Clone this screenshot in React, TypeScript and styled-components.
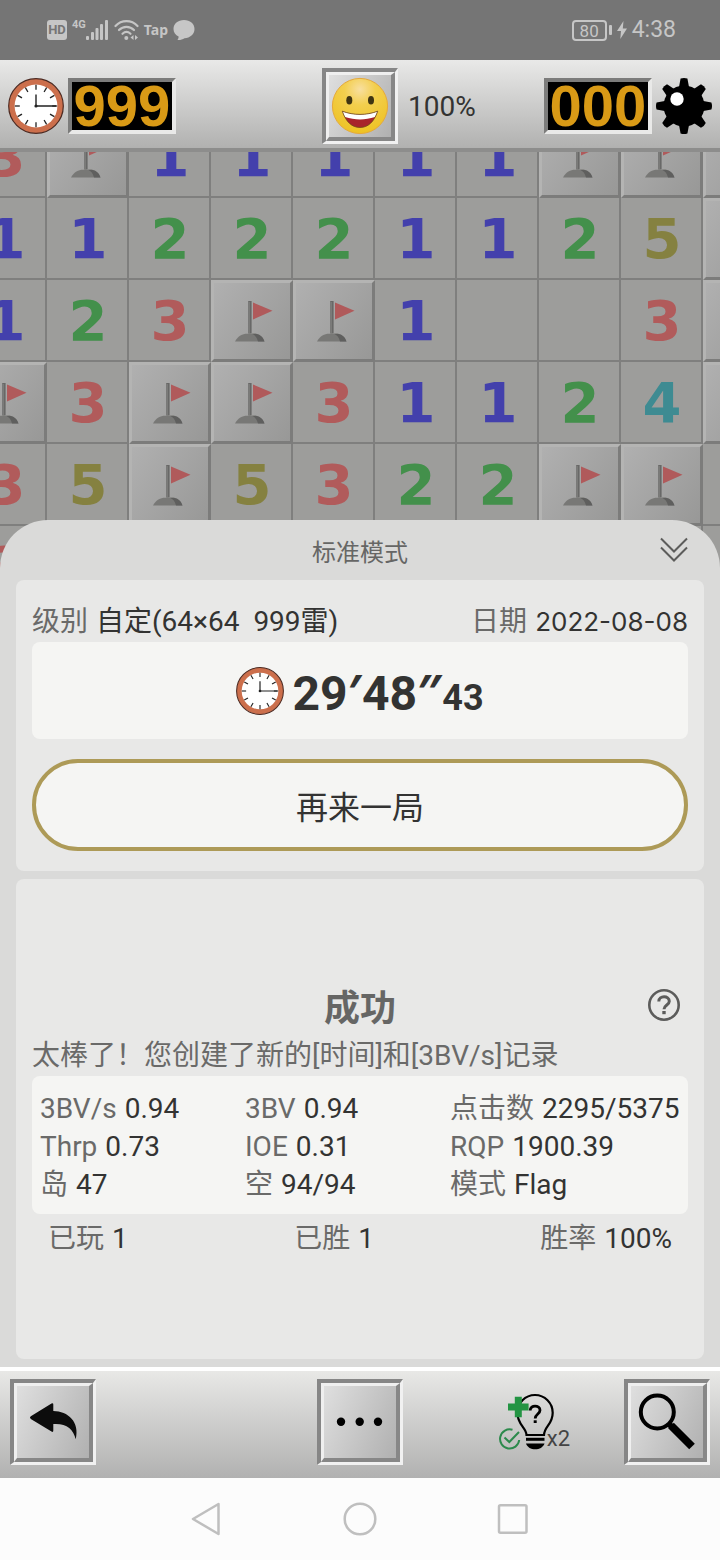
import React from "react";
import styled, { createGlobalStyle, css } from "styled-components";

const GlobalStyle = createGlobalStyle`
  *, *::before, *::after { box-sizing: border-box; }
  body {
    margin: 0;
    background: #fcfcfc;
    color: #333332;
    font-family: "Roboto", "Noto Sans CJK SC", sans-serif;
    font-size: 28px;
  }
  button { font: inherit; color: inherit; cursor: pointer; }
  svg { display: block; flex: none; }
`;

const Page = styled.div`
  min-height: 100vh;
  display: flex;
  flex-direction: column;
`;

/* ---------- system status bar ---------- */

const StatusBar = styled.header`
  height: 60px;
  padding: 0 44px 0 47px;
  display: flex;
  align-items: center;
  justify-content: space-between;
  background: #757575;
  color: #c6c6c6;
`;

const StatusGroup = styled.div`
  display: flex;
  align-items: center;
  gap: 5px;
`;

const HdBadge = styled.span`
  width: 20px;
  height: 20px;
  border-radius: 3px;
  background: #c6c6c6;
  color: #757575;
  font: bold 13px/20px "Roboto", sans-serif;
  text-align: center;
`;

const Network = styled.span`
  display: flex;
  align-items: flex-start;
  height: 22px;
  font: bold 11px/12px "Roboto", sans-serif;
`;

const TapLabel = styled.span`
  font: bold 14px/20px "Noto Sans", sans-serif;
`;

const Battery = styled.span`
  width: 35px;
  height: 21px;
  border: 2px solid #c6c6c6;
  border-radius: 4px;
  font: 17px/18px "Roboto", sans-serif;
  text-align: center;
`;

const BatteryTip = styled.span`
  width: 3px;
  height: 10px;
  margin-left: -3px;
  border-radius: 1px;
  background: #c6c6c6;
`;

const StatusTime = styled.time`
  font: 23px/28px "Roboto", sans-serif;
`;

/* ---------- game bar ---------- */

const GameBar = styled.div`
  height: 92px;
  padding: 4px 8px 0;
  display: grid;
  grid-template-columns: 1fr auto 1fr;
  align-items: center;
  border-bottom: 4px solid #8d8d8c;
  background: linear-gradient(#e9e9e8, #b1b1b0);
`;

const BarSide = styled.div`
  display: flex;
  align-items: center;
  gap: 4px;
`;

const Progress = styled.span`
  flex: 1;
  padding-left: 10px;
`;

const Counter = styled.output`
  width: 108px;
  height: 56px;
  display: flex;
  align-items: center;
  justify-content: center;
  border: 4px solid;
  border-color: #7c7c7b #e9e9e8 #e9e9e8 #7c7c7b;
  background: #000;
  color: #d99a16;
  font: bold 58px/48px "Liberation Sans", sans-serif;
`;

const BevelFrame = styled.button<{ $size: number }>`
  width: ${(p) => p.$size}px;
  height: ${(p) => p.$size}px;
  padding: 0;
  border: solid;
  border-width: 4px 3px 3px 4px;
  border-color: #868686 #f1f1f1 #f1f1f1 #868686;
  background: none;
`;

const BevelFace = styled.span`
  width: 100%;
  height: 100%;
  display: flex;
  align-items: center;
  justify-content: center;
  border: solid;
  border-width: 3px 4px 4px 3px;
  border-color: #efefef #878787 #878787 #efefef;
  background: linear-gradient(115deg, #dfdfdf, #b0b0b0);
`;

/* ---------- board ---------- */

const Board = styled.main`
  height: 416px;
  overflow: hidden;
  background: #9d9d9b;
`;

const Field = styled.div`
  width: max-content;
  margin: -36px 0 0 -35px;
  display: grid;
  grid-template-columns: repeat(10, 82px);
  grid-auto-rows: 82px;
`;

const numberColors: Record<string, string> = {
  "1": "#4340ac",
  "2": "#43904b",
  "3": "#b15b5b",
  "4": "#3e8b92",
  "5": "#858140",
};

const Cell = styled.div<{ $raised?: boolean; $value: string }>`
  display: flex;
  align-items: center;
  justify-content: center;
  color: ${(p) => numberColors[p.$value] ?? "inherit"};
  font: bold 56px/80px "DejaVu Sans", sans-serif;
  ${(p) =>
    p.$raised
      ? css`
          border: 3px solid;
          border-color: #b4b4b3 #7c7c7b #7c7c7b #b4b4b3;
          background: linear-gradient(125deg, #b0b0b0, #989897);
        `
      : css`
          box-shadow: inset -2px -2px #7f7f7e;
        `}
`;

/* ---------- result sheet ---------- */

const Sheet = styled.section`
  position: relative;
  flex: 1;
  margin-top: -48px;
  padding: 0 16px 8px;
  display: flex;
  flex-direction: column;
  gap: 8px;
  border-radius: 48px 48px 0 0;
  background: #dadad9;
`;

const CenteredRow = styled.div<{ $height: number; $inset: number }>`
  height: ${(p) => p.$height}px;
  padding-right: ${(p) => p.$inset}px;
  padding-left: ${(p) => p.$inset}px;
  display: grid;
  grid-template-columns: 1fr auto 1fr;
  align-items: center;
`;

const SheetTitle = styled.h1`
  grid-column: 2;
  margin: 0;
  color: #666665;
  font-size: 24px;
  font-weight: 400;
`;

const IconButton = styled.button`
  justify-self: end;
  padding: 0;
  border: 0;
  background: none;
  color: #5c5c5b;
`;

const Card = styled.section<{ $fill?: boolean }>`
  padding: ${(p) => (p.$fill ? "0 16px" : "0 16px 20px")};
  border-radius: 8px;
  background: #e8e8e7;
  ${(p) =>
    p.$fill
      ? css`
          flex: 1;
          display: flex;
          flex-direction: column;
          justify-content: center;
        `
      : css`
          margin-top: -8px;
        `}
`;

const Pair = styled.div`
  display: flex;
  align-items: baseline;
  gap: 8px;
  line-height: 42px;
  white-space: pre;
`;

const InfoRow = styled.dl`
  margin: 0;
  padding-top: 22px;
  display: flex;
  justify-content: space-between;

  ${Pair} { line-height: 40px; }
`;

const Label = styled.dt`
  color: #6a6a69;
`;

const Value = styled.dd`
  margin: 0;
`;

const DateValue = styled(Value)`
  font-family: "Inter", sans-serif;
  font-size: 26px;
`;

const TimeBox = styled.div`
  height: 97px;
  display: flex;
  align-items: center;
  justify-content: center;
  gap: 8px;
  border-radius: 8px;
  background: #f5f5f3;
  font-weight: 700;
`;

const Time = styled.time`
  padding-top: 8px;
  font-size: 48px;
  line-height: 60px;
`;

const Prime = styled.span`
  font-family: "Noto Sans", sans-serif;
`;

const Fraction = styled.span`
  font-size: 36px;
`;

const AgainButton = styled.button`
  width: 100%;
  height: 92px;
  margin-top: 20px;
  border: 4px solid #ad9a57;
  border-radius: 46px;
  background: #f5f5f3;
  font-size: 32px;
`;

const ResultTitle = styled.h2`
  grid-column: 2;
  margin: 0;
  color: #666665;
  font-size: 36px;
  font-weight: 700;
`;

const Message = styled.p`
  margin: 0;
  padding-top: 4px;
  color: #6a6a69;
  line-height: 40px;
`;

const Stats = styled.dl`
  margin: 0;
  padding: 14px 8px 10px;
  display: grid;
  grid-template-columns: 205fr 205fr 230fr;
  border-radius: 8px;
  background: #f5f5f3;

  ${Pair} { line-height: 38px; }
`;

const Summary = styled.dl`
  margin: 0;
  padding: 4px 16px 0;
  display: flex;
  justify-content: space-between;
`;

/* ---------- toolbar and navigation ---------- */

const Toolbar = styled.nav`
  height: 111px;
  padding: 8px 10px 0;
  display: grid;
  grid-template-columns: 86px 1fr 86px 1fr 86px;
  align-items: start;
  border-top: 4px solid #fff;
  background: linear-gradient(#e8e8e6, #bfbfbe 75%, #b1b1b1);
`;

const ToolSlot = styled.div<{ $column: number }>`
  grid-column: ${(p) => p.$column};
`;

const HintButton = styled.button`
  grid-column: 4;
  justify-self: end;
  margin-right: 54px;
  padding: 11px 0 0;
  display: flex;
  align-items: flex-end;
  border: 0;
  background: none;
`;

const HintCount = styled.span`
  margin-left: -10px;
  color: #444;
  font-size: 22px;
  line-height: 22px;
`;

const SystemNav = styled.footer`
  height: 82px;
  display: flex;
  align-items: center;
  justify-content: center;
  gap: 119px;
  background: #fcfcfc;
`;

const NavButton = styled.button`
  padding: 0;
  border: 0;
  background: none;
  color: #bfbfbf;
`;

/* ---------- drawings ---------- */

const ticks = Array.from({ length: 12 }, (_, i) => i * 30);

const Clock = ({ size }: { size: number }) => (
  <svg width={size} height={size} viewBox="0 0 56 56" aria-hidden="true">
    <circle cx="28" cy="28" r="27.3" fill="#cc6f4c" stroke="#4c2a22" strokeWidth="1.2" />
    <circle cx="28" cy="28" r="21.4" fill="#fff" />
    {ticks.map((a) => (
      <path key={a} d="M28 6.8v5" stroke="#222" strokeWidth="1.3" transform={`rotate(${a} 28 28)`} />
    ))}
    <path d="M28 28V16.5M28 28h20" stroke="#222" strokeWidth="1.4" />
    <circle cx="28" cy="28" r="1.6" fill="#222" />
  </svg>
);

const Smiley = () => (
  <svg width="58" height="58" viewBox="-1 -1 58 58" aria-hidden="true">
    <defs>
      <radialGradient id="skin" cx="0.5" cy="0.2" r="0.8">
        <stop offset="0" stopColor="#f8dfa0" />
        <stop offset="0.35" stopColor="#f3cf4e" />
        <stop offset="1" stopColor="#eec224" />
      </radialGradient>
    </defs>
    <circle cx="28" cy="28" r="27.6" fill="url(#skin)" stroke="#e5a93c" strokeWidth="1" />
    <ellipse cx="17.3" cy="22.2" rx="3" ry="4.3" fill="#3f3412" />
    <ellipse cx="39" cy="22.2" rx="3" ry="4.3" fill="#3f3412" />
    <path d="M10.3 33.2C14 44 20 49.5 28 49.5S42 44 45.7 33.2C34 37.5 22 37.5 10.3 33.2Z" fill="#a8232b" />
    <path
      d="M10.3 33.2C22 37.5 34 37.5 45.7 33.2C44.8 35.6 44 37.4 43 39C33 42.2 23 42.2 13 39C12 37.4 11.2 35.6 10.3 33.2Z"
      fill="#fff"
    />
    <path
      d="M10.3 33.2C14 44 20 49.5 28 49.5S42 44 45.7 33.2C34 37.5 22 37.5 10.3 33.2Z"
      fill="none"
      stroke="#6d4a17"
      strokeWidth="0.8"
    />
  </svg>
);

const Mine = () => (
  <svg width="56" height="56" viewBox="0 0 56 56" aria-hidden="true">
    <circle cx="28" cy="28" r="20.5" />
    {[0, 45, 90, 135, 180, 225, 270, 315].map((a) => (
      <path key={a} d="M22.8 10L24.6 0.6Q28 -0.6 31.4 0.6L33.2 10Z" transform={`rotate(${a} 28 28)`} />
    ))}
    <circle cx="21" cy="21" r="6.7" fill="#fff" />
  </svg>
);

const Flag = () => (
  <svg width="42" height="42" viewBox="20 20 42 42" aria-hidden="true">
    <path d="M24 61.5C27 56 31.5 53.8 36 53.8h7c4.5 0 8.5 2.5 10.5 7.7Z" fill="#787876" />
    <path d="M41 53.8h2.5c4.5 0 8.5 2.5 10 7.7h-6.5C46 57.5 44 55 41 53.8Z" fill="#5f5f5e" />
    <path d="M37.2 21h3.4v32.5h-3.4z" fill="#686867" />
    <path d="M38.2 22v31" stroke="#8a8a89" strokeWidth="0.8" />
    <path d="M42 22.5l19.5 8.3L42 39.5Z" fill="#b05a5b" />
  </svg>
);

const Signal = () => (
  <svg width="23" height="22" viewBox="0 0 23 22" fill="currentColor" aria-hidden="true">
    <rect x="0" y="17" width="3" height="4" rx="1" />
    <rect x="5" y="13" width="3" height="8" rx="1" />
    <rect x="9.5" y="9" width="3" height="12" rx="1" />
    <rect x="14" y="5" width="3" height="16" rx="1" />
    <rect x="19" y="1" width="3" height="20" rx="1" />
  </svg>
);

const Wifi = () => (
  <svg width="25" height="22" viewBox="0 0 25 22" aria-hidden="true">
    <g fill="none" stroke="currentColor" strokeWidth="2.2" strokeLinecap="round">
      <path d="M1.5 7C7.5 0.6 17.5 0.6 23.5 7" />
      <path d="M5 11c4.2-4.3 10.8-4.3 15 0" />
      <path d="M8.5 14.8c2.4-2.2 5.6-2.2 8 0" />
    </g>
    <circle cx="12.3" cy="19" r="2" fill="currentColor" />
    <path d="M16.5 18.5l3-2.5v5ZM24 18.5l-3-2.5v5Z" fill="currentColor" />
  </svg>
);

const Bubble = () => (
  <svg width="22" height="22" viewBox="0 0 22 22" fill="currentColor" aria-hidden="true">
    <path d="M11 1C17 1 21.5 4.7 21.5 10S17 19 11.5 19.2C9.5 20.5 7 21.3 4.5 21C5.3 20 5.7 18.8 5.6 17.6C2.5 16 0.5 13.5 0.5 10C0.5 4.7 5 1 11 1Z" />
  </svg>
);

const Bolt = () => (
  <svg width="10" height="18" viewBox="0 0 10 18" fill="currentColor" aria-hidden="true">
    <path d="M6.5 0L0 10h4L3.3 18L10 7.5H5.8Z" />
  </svg>
);

const DoubleChevron = () => (
  <svg width="28" height="26" viewBox="0 0 28 26" fill="none" stroke="currentColor" strokeWidth="2" aria-hidden="true">
    <path d="M1 1.5L14 14.5L27 1.5M1 10.5L14 23.5L27 10.5" />
  </svg>
);

const HelpIcon = () => (
  <svg width="32" height="32" viewBox="0 0 32 32" fill="none" stroke="currentColor" aria-hidden="true">
    <circle cx="16" cy="16" r="14.7" strokeWidth="2.6" />
    <path d="M10.8 12.5C10.8 6.3 21.3 6.3 21.3 12.3C21.3 16 16 16 16 20.3" strokeWidth="3" />
    <path d="M16 22v3.2" strokeWidth="3.4" />
  </svg>
);

const BackArrow = () => (
  <svg width="70" height="70" viewBox="0 0 70 70" fill="#0c0c0c" aria-hidden="true">
    <path d="M12.8 29.3L33.5 16.4Q35.3 15.6 35.3 17.5V24C50 24 62 35 57.7 52.3C55.5 42 48 36 35.3 37V43.5Q35.3 45.6 33.5 44.5L12.8 32Q11 30.6 12.8 29.3Z" />
  </svg>
);

const Dots = () => (
  <svg width="70" height="70" viewBox="0 0 70 70" aria-hidden="true">
    <circle cx="16" cy="34.7" r="4.2" />
    <circle cx="34.7" cy="34.7" r="4.2" />
    <circle cx="53" cy="34.7" r="4.2" />
  </svg>
);

const Magnifier = () => (
  <svg width="70" height="70" viewBox="0 0 70 70" fill="none" stroke="#000" aria-hidden="true">
    <circle cx="25.3" cy="25" r="16.5" strokeWidth="4" />
    <path d="M36.5 36.5L42 42" strokeWidth="6" />
    <path d="M39 38.5L60 59.5" strokeWidth="8" />
  </svg>
);

const HintBulb = () => (
  <svg width="60" height="60" viewBox="0 0 60 60" fill="none" aria-hidden="true">
    <path
      d="M29.5 45C29.5 38 20.3 34.5 20.3 22.7A17.7 17.7 0 0 1 55.7 22.7C55.7 34.5 47.5 36 47 45Z"
      stroke="#000"
      strokeWidth="2.2"
    />
    <path d="M29 49.3h18.5" stroke="#000" strokeWidth="3" />
    <path d="M29 53.5h18.5C46 57.5 42.5 59.3 38.2 59.3S30.5 57.5 29 53.5Z" fill="#000" />
    <path d="M33.2 20.5C33.2 14.5 43 14.8 43 20.3C43 24 38.2 24 38.2 28.5" stroke="#000" strokeWidth="2.8" />
    <path d="M38.2 30.3v2.7" stroke="#000" strokeWidth="3" />
    <path d="M21.3 6.7v20.6M11 17h20.6" stroke="#239443" strokeWidth="7" />
    <g stroke="#2c8a4c" strokeWidth="2">
      <path d="M15.5 39.8A9.6 9.6 0 1 0 22.2 50" />
      <path d="M7.5 47.5l4.8 4.5L22 42" />
    </g>
  </svg>
);

const NavIcon = ({ children }: { children: React.ReactNode }) => (
  <svg
    width="34"
    height="34"
    viewBox="0 0 34 34"
    fill="none"
    stroke="currentColor"
    strokeWidth="2.5"
    strokeLinejoin="round"
    aria-hidden="true"
  >
    {children}
  </svg>
);

/* ---------- data ---------- */

// F is a flagged cell, a dot is an opened empty one
const rows = ["3F11111FFF", "112221125F", "123FF1..3F", "F3FF31124F", "35F5322FF.", "3........."];

const stats = [
  ["3BV/s", "0.94"],
  ["3BV", "0.94"],
  ["点击数", "2295/5375"],
  ["Thrp", "0.73"],
  ["IOE", "0.31"],
  ["RQP", "1900.39"],
  ["岛", "47"],
  ["空", "94/94"],
  ["模式", "Flag"],
];

const totals = [
  ["已玩", "1"],
  ["已胜", "1"],
  ["胜率", "100%"],
];

const Entry = ({ label, value }: { label: string; value: string }) => (
  <Pair>
    <Label>{label}</Label>
    <Value>{value}</Value>
  </Pair>
);

const BevelButton = ({ size, label, children }: { size: number; label: string; children: React.ReactNode }) => (
  <BevelFrame type="button" $size={size} aria-label={label}>
    <BevelFace>{children}</BevelFace>
  </BevelFrame>
);

export default function App() {
  return (
    <Page>
      <GlobalStyle />
      <StatusBar>
        <StatusGroup>
          <HdBadge>HD</HdBadge>
          <Network>
            4G
            <Signal />
          </Network>
          <Wifi />
          <TapLabel>Tap</TapLabel>
          <Bubble />
        </StatusGroup>
        <StatusGroup>
          <Battery>80</Battery>
          <BatteryTip />
          <Bolt />
          <StatusTime>4:38</StatusTime>
        </StatusGroup>
      </StatusBar>

      <GameBar>
        <BarSide>
          <Clock size={56} />
          <Counter>999</Counter>
        </BarSide>
        <BevelButton size={76} label="重新开始">
          <Smiley />
        </BevelButton>
        <BarSide>
          <Progress>100%</Progress>
          <Counter>000</Counter>
          <Mine />
        </BarSide>
      </GameBar>

      <Board>
        <Field>
          {rows.flatMap((row, y) =>
            row.split("").map((value, x) => (
              <Cell key={`${y}-${x}`} $value={value} $raised={value === "F"}>
                {value === "F" ? <Flag /> : value === "." ? null : value}
              </Cell>
            ))
          )}
        </Field>
      </Board>

      <Sheet>
        <CenteredRow $height={60} $inset={16}>
          <SheetTitle>标准模式</SheetTitle>
          <IconButton type="button" aria-label="收起">
            <DoubleChevron />
          </IconButton>
        </CenteredRow>
        <Card>
          <InfoRow>
            <Entry label="级别" value="自定(64×64  999雷)" />
            <Pair>
              <Label>日期</Label>
              <DateValue>2022-08-08</DateValue>
            </Pair>
          </InfoRow>
          <TimeBox>
            <Clock size={48} />
            <Time>
              29<Prime>′</Prime>48<Prime>″</Prime>
              <Fraction>43</Fraction>
            </Time>
          </TimeBox>
          <AgainButton type="button">再来一局</AgainButton>
        </Card>
        <Card $fill>
          <CenteredRow $height={54} $inset={8}>
            <ResultTitle>成功</ResultTitle>
            <IconButton type="button" aria-label="帮助">
              <HelpIcon />
            </IconButton>
          </CenteredRow>
          <Message>太棒了！您创建了新的[时间]和[3BV/s]记录</Message>
          <Stats>
            {stats.map(([label, value]) => (
              <Entry key={label} label={label} value={value} />
            ))}
          </Stats>
          <Summary>
            {totals.map(([label, value]) => (
              <Entry key={label} label={label} value={value} />
            ))}
          </Summary>
        </Card>
      </Sheet>

      <Toolbar>
        <ToolSlot $column={1}>
          <BevelButton size={86} label="返回">
            <BackArrow />
          </BevelButton>
        </ToolSlot>
        <ToolSlot $column={3}>
          <BevelButton size={86} label="更多">
            <Dots />
          </BevelButton>
        </ToolSlot>
        <HintButton type="button" aria-label="提示 x2">
          <HintBulb />
          <HintCount>x2</HintCount>
        </HintButton>
        <ToolSlot $column={5}>
          <BevelButton size={86} label="缩放">
            <Magnifier />
          </BevelButton>
        </ToolSlot>
      </Toolbar>

      <SystemNav>
        <NavButton type="button" aria-label="后退">
          <NavIcon>
            <path d="M3 17L28.5 2V32Z" />
          </NavIcon>
        </NavButton>
        <NavButton type="button" aria-label="主屏幕">
          <NavIcon>
            <circle cx="17" cy="17" r="15.3" />
          </NavIcon>
        </NavButton>
        <NavButton type="button" aria-label="最近任务">
          <NavIcon>
            <rect x="3" y="3.2" width="27.5" height="27.5" rx="1.5" />
          </NavIcon>
        </NavButton>
      </SystemNav>
    </Page>
  );
}
